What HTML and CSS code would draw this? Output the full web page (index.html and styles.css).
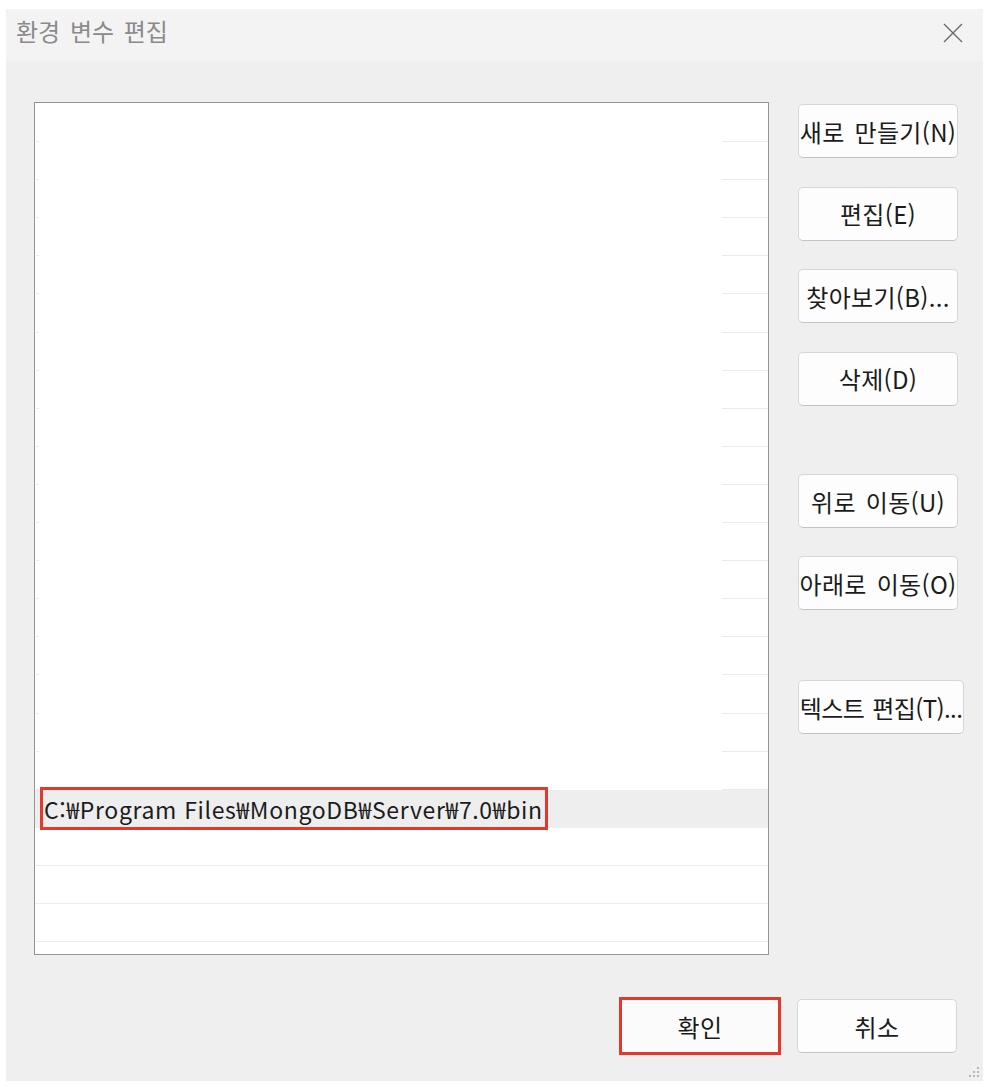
FILE: index.html
```html
<!DOCTYPE html>
<html lang="ko">
<head>
<meta charset="utf-8">
<title>환경 변수 편집</title>
<link rel="stylesheet" href="styles.css">
</head>
<body>
<div class="window">
  <div class="titlebar">
    <span class="title">환경 변수 편집</span>
    <svg class="close" width="20" height="20" viewBox="0 0 20 20"><path d="M1 1 L19 19 M19 1 L1 19" stroke="#6b6b6b" stroke-width="1.4" fill="none"/></svg>
  </div>
  <div class="content">
    <div class="main">
      <div class="listbox">
        <div class="row sparse"></div>
        <div class="row sparse"></div>
        <div class="row sparse"></div>
        <div class="row sparse"></div>
        <div class="row sparse"></div>
        <div class="row sparse"></div>
        <div class="row sparse"></div>
        <div class="row sparse"></div>
        <div class="row sparse"></div>
        <div class="row sparse"></div>
        <div class="row sparse"></div>
        <div class="row sparse"></div>
        <div class="row sparse"></div>
        <div class="row sparse"></div>
        <div class="row sparse"></div>
        <div class="row sparse"></div>
        <div class="row sparse"></div>
        <div class="row sparse"></div>
        <div class="row selected"><span class="path">C:₩Program Files₩MongoDB₩Server₩7.0₩bin</span></div>
        <div class="row full"></div>
        <div class="row full"></div>
        <div class="row full"></div>
      </div>
      <div class="side">
        <div class="group">
          <button class="btn">새로 만들기(N)</button>
          <button class="btn">편집(E)</button>
          <button class="btn">찾아보기(B)...</button>
          <button class="btn">삭제(D)</button>
        </div>
        <div class="group move">
          <button class="btn">위로 이동(U)</button>
          <button class="btn">아래로 이동(O)</button>
        </div>
        <div class="group text">
          <button class="btn wide">텍스트 편집(T)...</button>
        </div>
      </div>
    </div>
    <div class="footer">
      <span class="hl"><button class="btn ok">확인</button></span>
      <button class="btn">취소</button>
    </div>
  </div>
  <svg class="grip" width="12" height="12" viewBox="0 0 12 12">
    <rect x="9" y="1" width="2" height="2" fill="#b8b8b8"/>
    <rect x="5" y="5" width="2" height="2" fill="#b8b8b8"/>
    <rect x="9" y="5" width="2" height="2" fill="#b8b8b8"/>
    <rect x="1" y="9" width="2" height="2" fill="#b8b8b8"/>
    <rect x="5" y="9" width="2" height="2" fill="#b8b8b8"/>
    <rect x="9" y="9" width="2" height="2" fill="#b8b8b8"/>
  </svg>
</div>
</body>
</html>
```
FILE: styles.css
```css
html, body {
  margin: 0;
  padding: 0;
  background: #ffffff;
}
body {
  font-family: "Noto Sans CJK KR", "Noto Sans", sans-serif;
  overflow: hidden;
}
.window {
  position: relative;
  width: 977px;
  height: 1072px;
  margin: 9px 0 0 6px;
  background: #efefef;
  box-sizing: border-box;
}
.titlebar {
  height: 52px;
  background: #f3f3f3;
  display: flex;
  align-items: center;
  justify-content: space-between;
  padding: 0 20px 0 10px;
}
.title {
  font-size: 24px;
  color: #8a8a8a;
  line-height: 1;
  margin-top: -8px;
  word-spacing: 3px;
}
.close {
  display: block;
  margin-top: -4px;
}
.content {
  padding: 41px 0 0 28px;
}
.main {
  display: flex;
  gap: 29px;
}
.listbox {
  width: 735px;
  height: 853px;
  box-sizing: border-box;
  border: 1px solid #949494;
  background: #ffffff;
  padding-top: 1px;
  overflow: hidden;
}
.row {
  height: 38.1px;
  box-sizing: border-box;
  display: flex;
  align-items: center;
}
.sparse {
  background:
    linear-gradient(#ebebeb, #ebebeb) right 0 bottom 0 / 46px 1px no-repeat,
    linear-gradient(#ebebeb, #ebebeb) left 1px bottom 0 / 3px 1px no-repeat;
}
.full {
  border-bottom: 1px solid #ececec;
}
.selected {
  background: #eeeeee;
}
.path {
  box-sizing: border-box;
  height: 43px;
  margin-left: 5px;
  border: 3px solid #e6372c;
  padding: 0 2px 0 1px;
  display: flex;
  align-items: center;
  font-size: 23px;
  letter-spacing: 0.65px;
  color: #1c1c1c;
  white-space: nowrap;
}
.side {
  width: 160px;
  padding-top: 2px;
  display: flex;
  flex-direction: column;
}
.group {
  display: flex;
  flex-direction: column;
  gap: 28.5px;
}
.move {
  margin-top: 68.5px;
  gap: 28px;
}
.text {
  margin-top: 70px;
}
.btn {
  font-family: "Noto Sans CJK KR", "Noto Sans", sans-serif;
  width: 160px;
  height: 54px;
  box-sizing: border-box;
  background: #fdfdfd;
  border: 1px solid #d6d6d6;
  border-bottom-color: #c4c4c4;
  border-radius: 5px;
  font-size: 24px;
  color: #1b1b1b;
  padding: 0;
  white-space: nowrap;
  display: flex;
  align-items: center;
  justify-content: center;
  overflow: visible;
  letter-spacing: 0.3px;
  word-spacing: 3px;
}
.wide {
  width: 166px;
  letter-spacing: -0.6px;
  word-spacing: 2px;
}
.footer {
  margin-top: 42px;
  display: flex;
  justify-content: flex-end;
  align-items: center;
  gap: 16px;
  padding-right: 26px;
}
.hl {
  box-sizing: border-box;
  width: 162px;
  height: 58px;
  border: 3px solid #e6372c;
  display: flex;
}
.ok {
  width: 100%;
  height: 100%;
  border: none;
  border-radius: 0;
  background: #fbfbfb;
}
.grip {
  position: absolute;
  right: 3px;
  bottom: 3px;
}
```
